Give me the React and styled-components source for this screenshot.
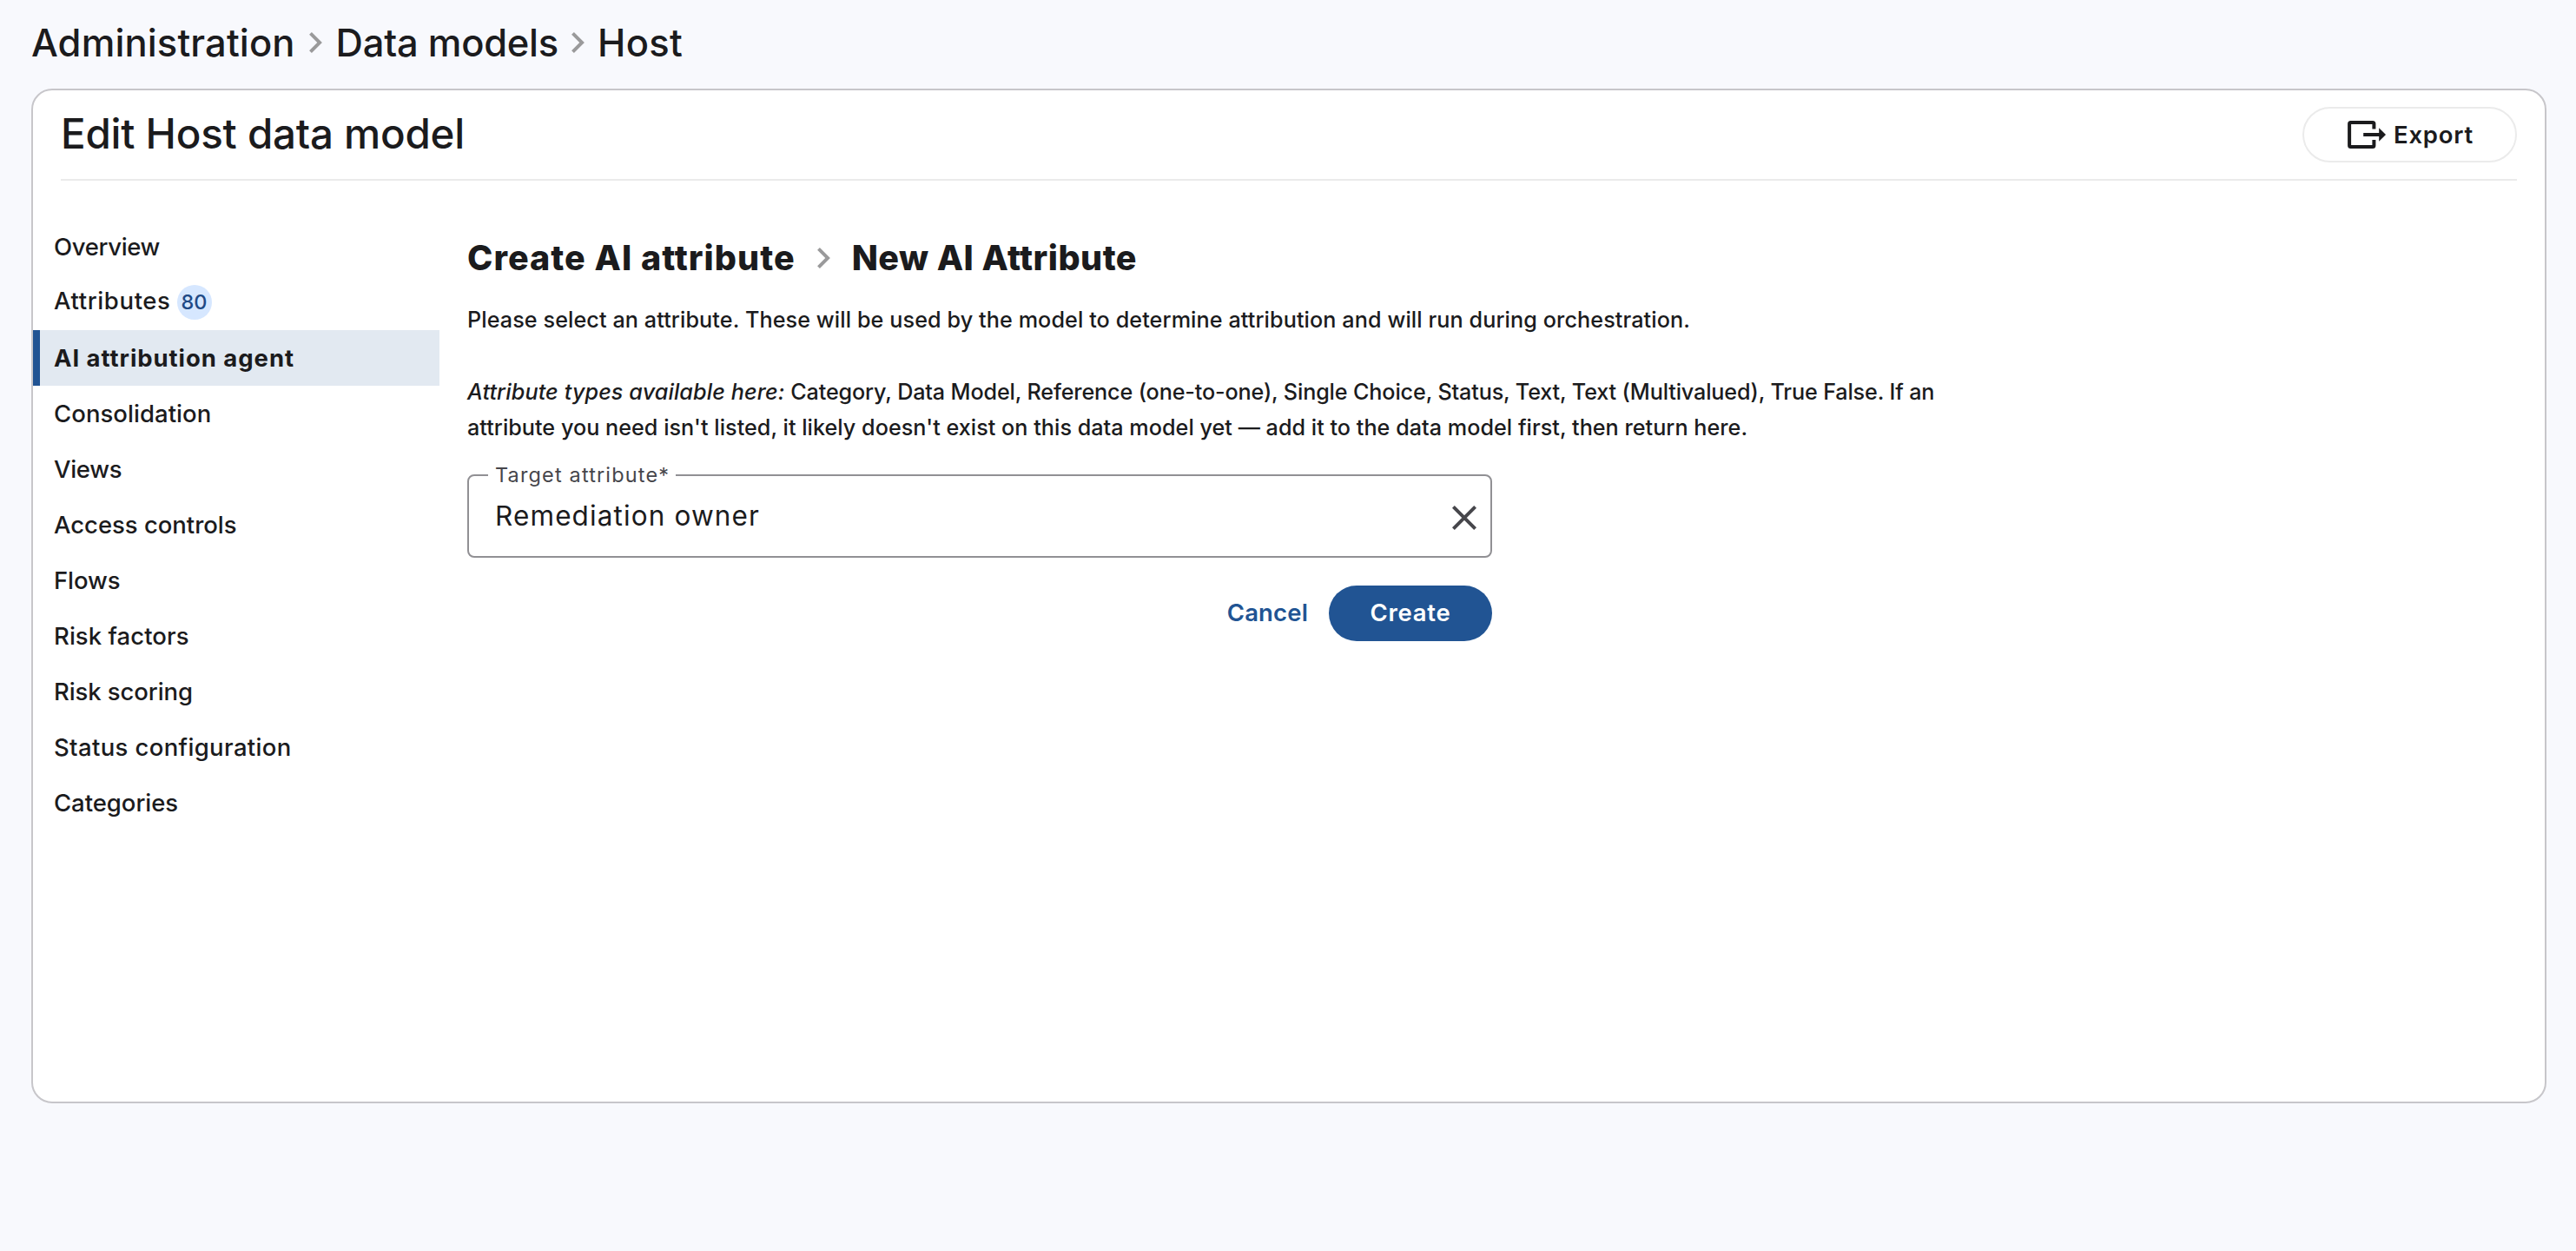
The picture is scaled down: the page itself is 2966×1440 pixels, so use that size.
import React, { useState } from 'react'
import styled, { createGlobalStyle } from 'styled-components'

const GlobalStyle = createGlobalStyle`
* {
  box-sizing: border-box;
}
body {
  margin: 0;
  background: #f8f9fd;
  color: #1b1b1d;
  font-family: Inter, "Liberation Sans", sans-serif;
}
h1, h2, p {
  margin: 0;
}
button {
  font-family: inherit;
  cursor: pointer;
}
`

const Page = styled.div`
min-height: 1440px;
padding: 0 34px 0 36px;
`

const Tracked = styled.span`
letter-spacing: ${p => p.$track || 0}px;
white-space: nowrap;
`

const Breadcrumbs = styled.nav`
display: flex;
align-items: center;
height: 102px;
padding-bottom: 4px;
font-size: 43.5px;
font-weight: 500;
`

const ChevronIcon = styled.svg`
flex: none;
width: 15px;
height: 24px;
margin: 0 ${p => p.$gap || 15}px;
fill: #9a9a9b;
`

const Card = styled.div`
height: 1168px;
background: white;
border: 2px solid #c7c6ca;
border-radius: 24px;
`

const CardHeader = styled.header`
display: flex;
align-items: center;
justify-content: space-between;
height: 104px;
margin: 0 32px;
border-bottom: 2px solid #ebebeb;
`

const Title = styled.h1`
padding-bottom: 3px;
font-size: 47.5px;
font-weight: 500;
letter-spacing: -0.24px;
`

const ExportButton = styled.button`
display: flex;
align-items: center;
justify-content: center;
gap: 9px;
width: 247px;
height: 64px;
padding: 0 0 1px 2px;
background: white;
border: 2px solid #ebebeb;
border-radius: 32px;
color: #1b1b1d;
font-size: 27.5px;
font-weight: 600;
letter-spacing: 0.8px;
`

const CardBody = styled.div`
display: flex;
gap: 32px;
`

const Sidebar = styled.nav`
display: flex;
flex-direction: column;
width: 468px;
padding-top: 44px;
`

const SidebarItem = styled.div`
display: flex;
align-items: center;
height: 64px;
padding-left: 16px;
border-left: 8px solid ${p => p.$active ? '#215493' : 'transparent'};
background: ${p => p.$active ? '#e2e9f1' : 'transparent'};
font-size: 27.5px;
font-weight: ${p => p.$active ? 700 : 500};
cursor: pointer;
`

const ItemLabel = styled.div`
display: flex;
align-items: baseline;
gap: 7px;
`

const Badge = styled.span`
width: 40px;
height: 40px;
border-radius: 50%;
background: #d6e7ff;
color: #1f4a86;
font-size: 23.5px;
line-height: 40px;
text-align: center;
`

const Content = styled.main`
padding-top: 65px;
`

const Heading = styled.h2`
display: flex;
align-items: center;
height: 48px;
font-size: 39.5px;
font-weight: 800;
`

const Text = styled.p`
margin-top: ${p => p.$top}px;
font-size: 25.2px;
font-weight: 500;
line-height: 41px;
`

const Field = styled.div`
position: relative;
display: flex;
align-items: center;
justify-content: space-between;
width: 1180px;
height: 96px;
margin-top: 33px;
padding: 0 16px 0 30px;
border: 2px solid #919094;
border-radius: 8px;
`

// sits on top of the field border
const FieldLabel = styled.label`
position: absolute;
top: -13px;
left: 22px;
width: 216px;
padding-left: 8px;
background: white;
color: #46464b;
font-size: 23.5px;
line-height: 24px;
letter-spacing: 1.15px;
`

const FieldValue = styled.span`
padding-bottom: 1px;
font-size: 31.5px;
letter-spacing: 1.12px;
`

const ClearButton = styled.button`
display: flex;
margin-top: 4px;
padding: 0;
background: none;
border: none;
`

const Actions = styled.div`
display: flex;
justify-content: flex-end;
gap: 24px;
width: 1180px;
margin-top: 32px;
`

const ActionButton = styled.button`
height: 64px;
width: ${p => p.$primary ? '188px' : 'auto'};
padding: 0 0 2px;
border: none;
border-radius: 32px;
background: ${p => p.$primary ? '#215493' : 'transparent'};
color: ${p => p.$primary ? 'white' : '#215493'};
font-size: 27.5px;
font-weight: 600;
letter-spacing: ${p => p.$primary ? 0.7 : 0.15}px;
`

const menu = [
  { name: 'Overview', track: -0.35 },
  { name: 'Attributes', track: 0.62, count: 80 },
  { name: 'AI attribution agent', track: 0.94 },
  { name: 'Consolidation', track: 0.05 },
  { name: 'Views', track: -0.3 },
  { name: 'Access controls', track: -0.03 },
  { name: 'Flows', track: -0.1 },
  { name: 'Risk factors', track: 0.06 },
  { name: 'Risk scoring', track: -0.1 },
  { name: 'Status configuration', track: 0.36 },
  { name: 'Categories', track: -0.05 },
]

const Chevron = ({ gap }) => (
  <ChevronIcon viewBox='8.59 6 7.41 12' $gap={gap}>
    <path d='M10 6 8.59 7.41 13.17 12l-4.58 4.59L10 18l6-6z' />
  </ChevronIcon>
)

const ExportIcon = () => (
  <svg width='44' height='32' viewBox='0 0 44 32' fill='none' stroke='#1b1b1d' strokeWidth='4'>
    <path d='M30.4 9.5V3.5Q30.4 2 28.9 2H3.6Q2.1 2 2.1 3.5V28.5Q2.1 30 3.6 30H28.9Q30.4 30 30.4 28.5V22' />
    <path d='M18.2 16H38' />
    <path d='M36.2 8.2 44 16l-7.8 7.8z' fill='#1b1b1d' stroke='none' />
  </svg>
)

export default function App() {

    const [ active, setActive ] = useState('AI attribution agent')
    const [ target, setTarget ] = useState('Remediation owner')

    return (
        <Page>
            <GlobalStyle />
            <Breadcrumbs>
                <Tracked $track={0.12}>Administration</Tracked>
                <Chevron gap={16} />
                <Tracked $track={-0.25}>Data models</Tracked>
                <Chevron />
                <Tracked $track={0.3}>Host</Tracked>
            </Breadcrumbs>

            <Card>
                <CardHeader>
                    <Title>Edit Host data model</Title>
                    <ExportButton><ExportIcon />Export</ExportButton>
                </CardHeader>

                <CardBody>
                    <Sidebar>
                        {menu.map(item => (
                            <SidebarItem
                                key={item.name}
                                $active={item.name === active}
                                onClick={() => setActive(item.name)}
                                >
                                <ItemLabel>
                                    <Tracked $track={item.track}>{item.name}</Tracked>
                                    {item.count && <Badge>{item.count}</Badge>}
                                </ItemLabel>
                            </SidebarItem>
                        ))}
                    </Sidebar>

                    <Content>
                        <Heading>
                            <Tracked $track={1.03}>Create AI attribute</Tracked>
                            <Chevron gap={25} />
                            <Tracked $track={0.46}>New AI Attribute</Tracked>
                        </Heading>
                        <Text $top={27}>
                            <Tracked $track={0.085}>Please select an attribute. These will be used by the model to determine attribution and will run during orchestration.</Tracked>
                        </Text>
                        <Text $top={42}>
                            <Tracked as='em' $track={0.1}>Attribute types available here:</Tracked>
                            {' '}
                            <Tracked $track={-0.152}>Category, Data Model, Reference (one-to-one), Single Choice, Status, Text, Text (Multivalued), True False. If an</Tracked>
                            <br />
                            <Tracked $track={0.018}>attribute you need isn't listed, it likely doesn't exist on this data model yet — add it to the data model first, then return here.</Tracked>
                        </Text>

                        <Field>
                            <FieldLabel>Target attribute*</FieldLabel>
                            <FieldValue>{target}</FieldValue>
                            <ClearButton onClick={() => setTarget('')}>
                                <svg width='28' height='28' viewBox='0 0 28 28' stroke='#46464b' strokeWidth='4'>
                                    <path d='M1.4 1.4 26.6 26.6M26.6 1.4 1.4 26.6' />
                                </svg>
                            </ClearButton>
                        </Field>
                        <Actions>
                            <ActionButton>Cancel</ActionButton>
                            <ActionButton $primary>Create</ActionButton>
                        </Actions>
                    </Content>
                </CardBody>
            </Card>
        </Page>
    )
}
